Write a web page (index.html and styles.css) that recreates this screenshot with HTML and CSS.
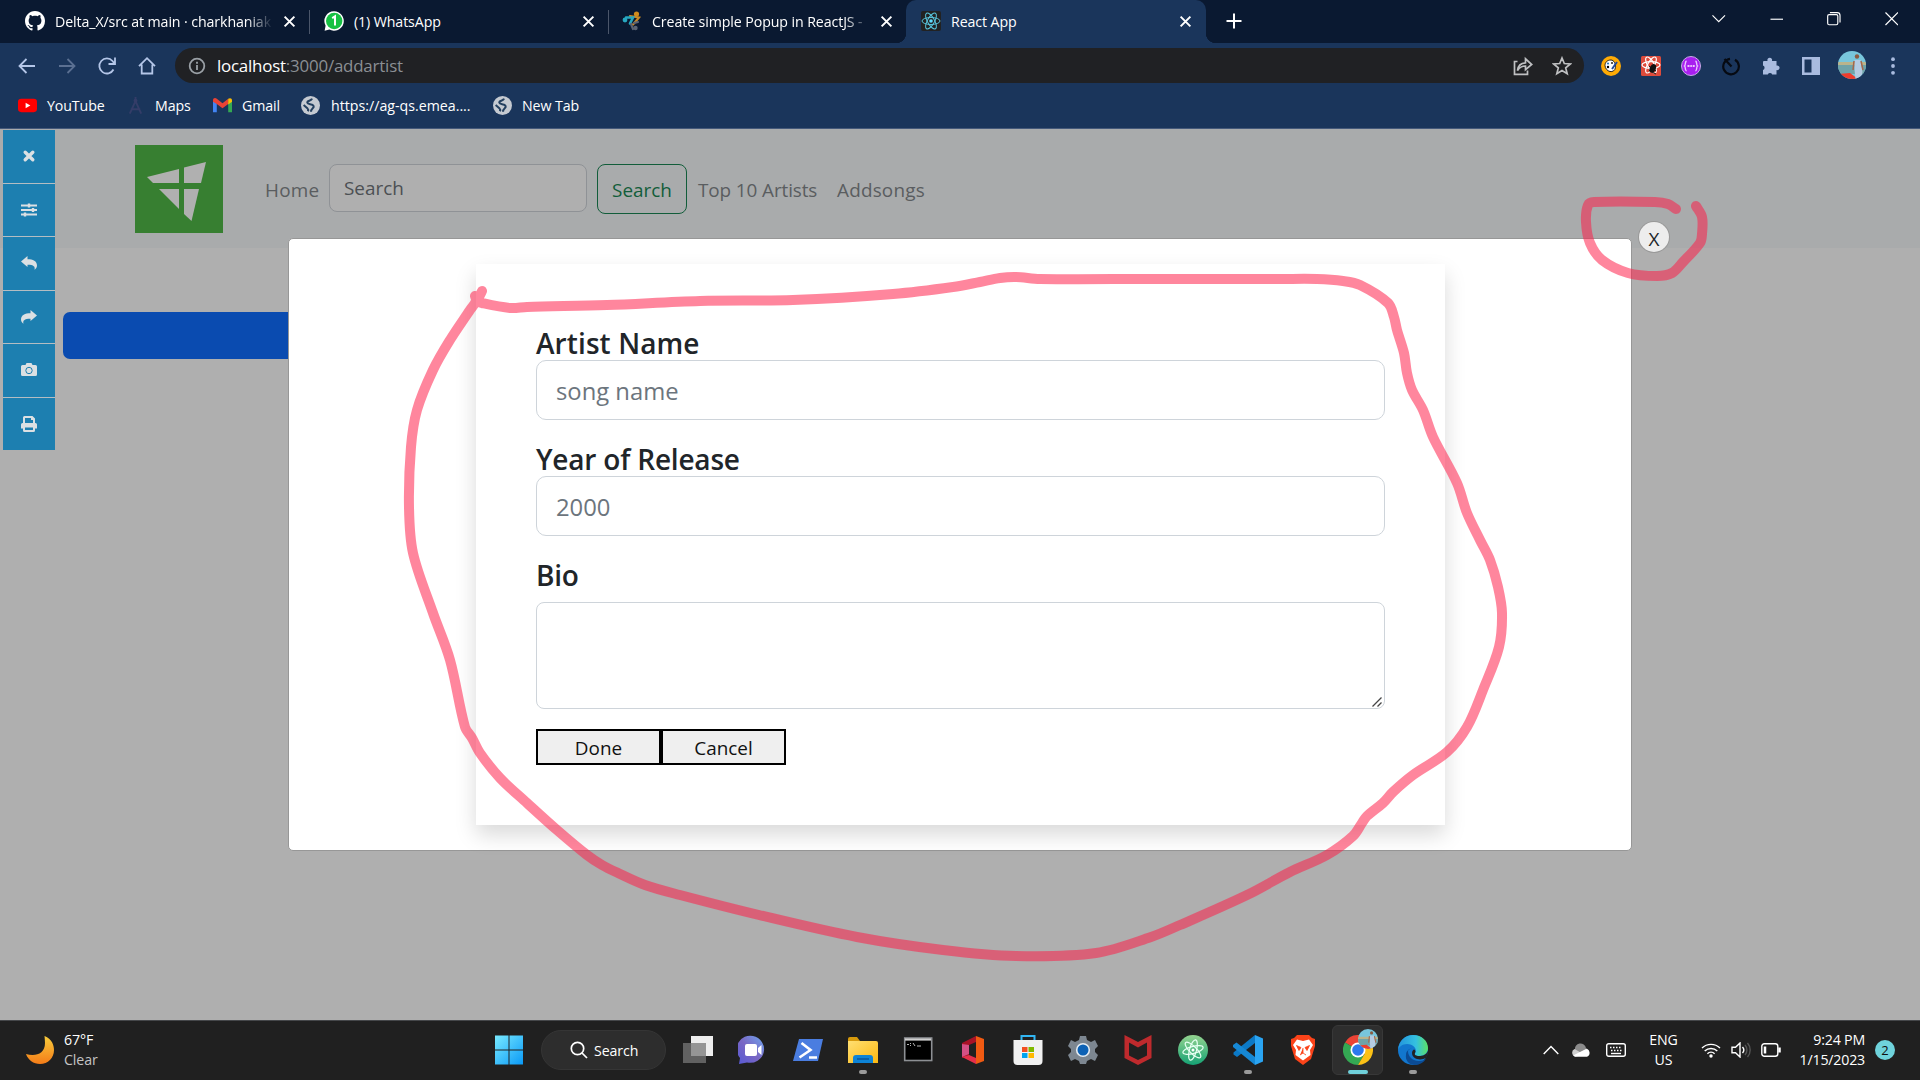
FILE: index.html
```html
<!DOCTYPE html>
<html lang="en">
<head>
<meta charset="utf-8">
<title>React App</title>
<link rel="stylesheet" href="styles.css">
</head>
<body>
<div class="desktop">
  <header class="tabstrip">
    <div class="tab tab-first">
      <svg class="fav" viewBox="0 0 16 16" fill="#fff"><path d="M8 0C3.58 0 0 3.58 0 8c0 3.54 2.29 6.53 5.47 7.59.4.07.55-.17.55-.38 0-.19-.01-.82-.01-1.49-2.01.37-2.53-.49-2.69-.94-.09-.23-.48-.94-.82-1.13-.28-.15-.68-.52-.01-.53.63-.01 1.08.58 1.23.82.72 1.21 1.87.87 2.33.66.07-.52.28-.87.51-1.07-1.78-.2-3.64-.89-3.64-3.95 0-.87.31-1.59.82-2.15-.08-.2-.36-1.02.08-2.12 0 0 .67-.21 2.2.82.64-.18 1.32-.27 2-.27s1.36.09 2 .27c1.53-1.04 2.2-.82 2.2-.82.44 1.1.16 1.92.08 2.12.51.56.82 1.27.82 2.15 0 3.07-1.87 3.75-3.65 3.95.29.25.54.73.54 1.48 0 1.07-.01 1.93-.01 2.2 0 .21.15.46.55.38A8.01 8.01 0 0 0 16 8c0-4.42-3.58-8-8-8z"/></svg>
      <span class="tab-title fade">Delta_X/src at main · charkhaniak</span>
      <svg class="close" viewBox="0 0 12 12"><path d="M1.5 1.5l9 9m0-9l-9 9"/></svg>
    </div>
    <div class="tab tab-second">
      <svg class="fav" viewBox="0 0 20 20"><path d="M10 .3A9.7 9.7 0 1 1 5.4 18.5L.6 19.8l1-5A9.7 9.7 0 0 1 10 .3z" fill="#fff"/><circle cx="10.2" cy="10" r="8.2" fill="#17c143"/><path d="M8.2 7.2l2.8-1.8v9.2" fill="none" stroke="#fff" stroke-width="2"/></svg>
      <span class="tab-title">(1) WhatsApp</span>
      <svg class="close" viewBox="0 0 12 12"><path d="M1.5 1.5l9 9m0-9l-9 9"/></svg>
    </div>
    <div class="tab tab-third">
      <svg class="fav" viewBox="0 0 20 20" fill="none" stroke-linecap="round"><circle cx="14.5" cy="3" r="2.6" fill="#d08b1c"/><path d="M8 5l9 1.5-6 7" stroke="#c98a25" stroke-width="2.2"/><circle cx="3" cy="9" r="2.4" fill="#27a8c0"/><path d="M4 6.5l7 0 -3 6" stroke="#27a8c0" stroke-width="2.6"/><circle cx="13.5" cy="17" r="2.2" fill="#5b6474"/><path d="M9 13l2 5m1-6l4-1" stroke="#5b6474" stroke-width="2.2"/></svg>
      <span class="tab-title fade">Create simple Popup in ReactJS -</span>
      <svg class="close" viewBox="0 0 12 12"><path d="M1.5 1.5l9 9m0-9l-9 9"/></svg>
    </div>
    <div class="tab tab-active">
      <svg class="fav" viewBox="0 0 20 20"><rect width="20" height="20" rx="2" fill="#222"/><g fill="none" stroke="#58c4dc" stroke-width="1"><ellipse cx="10" cy="10" rx="9" ry="3.5" transform="rotate(0 10 10)"/><ellipse cx="10" cy="10" rx="9" ry="3.5" transform="rotate(60 10 10)"/><ellipse cx="10" cy="10" rx="9" ry="3.5" transform="rotate(120 10 10)"/></g><circle cx="10" cy="10" r="1.8" fill="#61dafb"/></svg>
      <span class="tab-title">React App</span>
      <svg class="close" viewBox="0 0 12 12"><path d="M1.5 1.5l9 9m0-9l-9 9"/></svg>
    </div>
    <svg class="newtab" viewBox="0 0 16 16"><path d="M8 .5v15M.5 8h15"/></svg>
    <div class="winctl">
      <svg viewBox="0 0 14 14"><path d="M.5 3.5L7 10l6.500-6.500"/></svg>
      <svg viewBox="0 0 14 14"><path d="M.5 7.500h13"/></svg>
      <svg viewBox="0 0 14 14"><rect x=".7" y="2.700" width="10.500" height="10.500" rx="1.500"/><path d="M3 .7h7.500a3 3 0 0 1 3 3V11"/></svg>
      <svg viewBox="0 0 14 14"><path d="M.5.5l13 13m0-13l-13 13"/></svg>
    </div>
  </header>

  <nav class="toolbar">
    <div class="navbtns">
      <svg viewBox="0 0 20 20"><path d="M18 10H3M9.500 3L2.500 10l7 7"/></svg>
      <svg class="dim" viewBox="0 0 20 20"><path d="M2 10h15M10.500 3l7 7-7 7"/></svg>
      <svg viewBox="0 0 20 20"><path d="M16.500 13.500A7.500 7.500 0 1 1 15.500 5l2 2.500M18 1.500v6.500h-6.500"/></svg>
      <svg viewBox="0 0 20 20"><path d="M2 10.200L10 2.200l8 8M4.700 8.500V17.500h10.600V8.500"/></svg>
    </div>
    <div class="omnibox">
      <svg class="info" viewBox="0 0 18 18"><circle cx="9" cy="9" r="7.300"/><path d="M9 8v5M9 4.800v1.900"/></svg>
      <span class="url"><b>localhost</b>:3000/addartist</span>
      <svg class="omni-icon share" viewBox="0 0 20 20"><path d="M4.500 5.500H1.500V18.300H14.500V14.500"/><path d="M4.500 14.500c.5-5 3.500-7.500 8-7.700V2.800L18.700 8.500l-6.200 5.200V10c-4 0-6 1.300-8 4.500z"/></svg>
      <svg class="omni-icon" viewBox="0 0 20 20"><path d="M10 2l2.300 5.500 6 .5-4.600 3.900 1.500 5.900L10 14.600l-5.200 3.200 1.500-5.900L1.700 8l6-.5z"/></svg>
    </div>
    <div class="exts">
      <svg viewBox="0 0 20 20"><circle cx="10" cy="10" r="10" fill="#ffab05"/><path d="M10 4c-4 0-6 2.500-6 5.500S6.500 15 9 15.500s5-.8 5.500-4S13 4 10 4z" fill="#fff" stroke="#222"/><circle cx="7" cy="7.500" r="1.100" fill="#27b"/><circle cx="11" cy="7" r="1.100" fill="#333"/><circle cx="7" cy="11" r="1.200"/><path d="M16 6l-5 7" stroke="#234a9b" stroke-width="2"/></svg>
      <svg viewBox="0 0 20 20"><rect width="20" height="20" rx="1.500" fill="#de4b3b"/><g fill="none" stroke="#fff" stroke-width="1.200"><ellipse cx="10" cy="9" rx="9" ry="3.300"/><ellipse cx="10" cy="9" rx="9" ry="3.300" transform="rotate(60 10 9)"/><ellipse cx="10" cy="9" rx="9" ry="3.300" transform="rotate(120 10 9)"/></g><ellipse cx="12" cy="12.500" rx="3" ry="4.500" fill="#111" transform="rotate(25 12 12)"/><path d="M8 10l7 5M8 15l7-4M11 16l4 2" stroke="#111"/></svg>
      <svg viewBox="0 0 20 20"><circle cx="10" cy="10" r="9.500" fill="#a81ff0" stroke="#c9a8e8"/><path d="M5.500 5C3.500 6 5 9 3.500 10c1.500 1 0 4 2 5M14.500 5c2 1 .5 4 2 5-1.500 1 0 4-2 5" stroke="#e8c8ff" fill="none" stroke-width="1.400"/><path d="M6.500 10h2m.8 0h1.600m.8 0h2" stroke="#fff" stroke-width="1.500"/></svg>
      <svg viewBox="0 0 20 20"><path d="M9 2.300A7.800 7.800 0 1 0 14 3.300M3.500 2.500l7 7.500" fill="none" stroke="#060a12" stroke-width="2.200" transform="translate(0 .5)"/></svg>
      <svg viewBox="0 0 20 20"><path d="M3 5h3.500a2.400 2.400 0 1 1 4.500 0H15.500v4.500a2.400 2.400 0 1 1 0 4.600V18.500H11.200a2.400 2.400 0 0 0-4.400 0H2V14a2.400 2.400 0 0 0 0-4.500V6a1 1 0 0 1 1-1z" fill="#a9bbdf"/></svg>
      <svg viewBox="0 0 20 20"><path d="M1 1h18v18H1zM3.500 3.500v13h7v-13z" fill="#a9bbdf" fill-rule="evenodd"/></svg>
      <svg class="avatar" viewBox="0 0 28 28"><use href="#person"/></svg>
      <svg viewBox="0 0 20 20" fill="#a9bbdf"><circle cx="10" cy="3.200" r="1.900"/><circle cx="10" cy="10" r="1.900"/><circle cx="10" cy="16.800" r="1.900"/></svg>
    </div>
  </nav>

  <nav class="bookmarks">
    <a class="bm bm-yt"><svg viewBox="0 0 20 20"><rect y="3" width="20" height="14" rx="3.500" fill="#f00"/><path d="M8 7l5 3-5 3z" fill="#fff"/></svg>YouTube</a>
    <a class="bm bm-maps"><svg viewBox="0 0 16 20"><path d="M8 1v4M8 5.500L2 18.500M8 5.500l6 13M3 14h10" fill="none" stroke="#343d68" stroke-width="2"/><circle cx="8" cy="5" r="2" fill="#343d68"/></svg>Maps</a>
    <a class="bm bm-gmail"><svg viewBox="0 0 20 16"><path d="M0 3v12h4V6z" fill="#4285f4"/><path d="M20 3v12h-4V6z" fill="#34a853"/><path d="M0 2.500C0 0 2.500-.5 4 1l6 4.600L16 1v5.500L10 11 4 6.500 0 4z" fill="#ea4335"/><path d="M16 1c2-1.500 4-.5 4 1.500V4l-4 3z" fill="#fbbc04"/></svg>Gmail</a>
    <a class="bm bm-ag"><svg viewBox="0 0 18 18"><use href="#globe"/></svg>https://ag-qs.emea....</a>
    <a class="bm bm-new"><svg viewBox="0 0 18 18"><use href="#globe"/></svg>New Tab</a>
  </nav>

  <main class="page">
    <div class="navbar">
      <svg class="brand" viewBox="0 0 88 88"><rect width="88" height="88" fill="#377f31"/><g fill="#b0b0b0"><path d="M12 32l32-8v14H18z"/><path d="M49 22.500L71 17l-5 21H49z"/><path d="M24 44h20v20z"/><path d="M49 44h15L56.500 76 49 69z"/></g></svg>
      <a class="link home">Home</a>
      <div class="search-field">Search</div>
      <div class="search-btn">Search</div>
      <a class="link top10">Top 10 Artists</a>
      <a class="link songs">Addsongs</a>
    </div>
    <div class="blue-button"></div>

    <aside class="capture-tools">
      <div><svg viewBox="0 0 16 16"><path d="M4.200 4.200l7.600 7.600m0-7.600l-7.600 7.600" stroke="#dbe0e3" stroke-width="3.400" stroke-linecap="round"/></svg></div>
      <div><svg viewBox="0 0 16 16" stroke="#dbe0e3" stroke-width="2"><path d="M0 3.500h16M0 8h16M0 12.500h16"/><path d="M8 1.500v4M12 6v4M4 10.500v4" stroke-width="2.400"/></svg></div>
      <div><svg viewBox="0 0 16 16" fill="#dbe0e3"><path d="M0 6.500L6.500 1v3.200C12 4.200 16 6 16 10.500c0 2-1.200 3.500-2.500 4.300.8-3-.5-5-7-5V12z"/></svg></div>
      <div><svg viewBox="0 0 16 16" fill="#dbe0e3"><path d="M16 6.500L9.500 1v3.200C4 4.200 0 6 0 10.500c0 2 1.200 3.500 2.500 4.300-.8-3 .5-5 7-5V12z"/></svg></div>
      <div><svg viewBox="0 0 16 16"><path d="M1.500 3H4.500l1-2h5l1 2h3A1.500 1.500 0 0 1 16 4.500v8A1.500 1.500 0 0 1 14.500 14h-13A1.500 1.500 0 0 1 0 12.500v-8A1.500 1.500 0 0 1 1.500 3z" fill="#dbe0e3"/><circle cx="8" cy="8.500" r="3.200" fill="none" stroke="#1d7fb0"/></svg></div>
      <div><svg viewBox="0 0 16 16"><path d="M2 7V1.500A1.500 1.500 0 0 1 3.500 0h8L14 2.500V7h.5A1.500 1.500 0 0 1 16 8.500V12.500h-2v2A1.500 1.500 0 0 1 12.500 16h-9A1.500 1.500 0 0 1 2 14.500v-2H0v-4A1.500 1.500 0 0 1 1.500 7z" fill="#dbe0e3"/><path d="M4 2h6v2h2v3H4zM4 11.500h8V14H4z" fill="#1d7fb0"/></svg></div>
    </aside>

    <section class="popup">
      <div class="popup-close">X</div>
      <form class="card">
        <label class="wide">Artist Name</label>
        <div class="field">song name</div>
        <label>Year of Release</label>
        <div class="field">2000</div>
        <label>Bio</label>
        <div class="area"><textarea></textarea><svg class="grip" viewBox="0 0 10 10"><path d="M.5 9.500l9-9M5.500 9.500l4-4"/></svg></div>
        <div class="actions"><button type="button">Done</button><button type="button">Cancel</button></div>
      </form>
    </section>
  </main>

  <footer class="taskbar">
    <div class="weather">
      <svg viewBox="0 0 28 28"><path d="M18.500 0C26 3 28 9 28 14c0 8-6 14-14 14C7.500 28 2 24 0 18c9 2.500 19 .5 19-11 0-3-.5-7-.5-7z" fill="url(#moon)"/></svg>
      <div><span>67°F</span><span class="muted">Clear</span></div>
    </div>
    <div class="apps">
      <div class="app"><svg viewBox="0 0 30 30" fill="url(#win)"><path d="M1 .5h13.500v14H1zM15.500.5H29v14H15.500zM1 15.500h13.500v14H1zM15.500 15.500H29v14H15.500z"/></svg></div>
      <div class="tb-search"><svg viewBox="0 0 18 18"><circle cx="7.500" cy="7.500" r="6.200"/><path d="M12 12l5 5"/></svg>Search</div>
      <div class="app"><svg viewBox="0 0 30 30"><path d="M8 1h22v20H8z" fill="#eee"/><path d="M0 8h23v20H0z" fill="#777" opacity=".75"/></svg></div>
      <div class="app"><svg viewBox="0 0 30 30"><path d="M15 1a14 13.500 0 1 1-6 26.500L1 29l1-6A13.500 13.500 0 0 1 15 1z" fill="url(#chat)"/><rect x="7" y="9" width="12" height="12" rx="2" fill="#fff"/><path d="M20 13l3.500-3v10L20 17z" fill="#fff"/></svg></div>
      <div class="app"><svg viewBox="0 0 30 30"><path d="M6 4h24l-5 22H0z" fill="#4a7de0"/><path d="M8.500 8l9 7-11 7.500M16 22.500h8" fill="none" stroke="#fff" stroke-width="2.600"/></svg></div>
      <div class="app run"><svg viewBox="0 0 30 30"><path d="M0 4q0-2 2-2h7l3 4H0z" fill="#d79a0c"/><path d="M0 6h28q2 0 2 2v20H0z" fill="url(#folder)"/><path d="M5 28v-5q0-3 3-3h14q3 0 3 3v5z" fill="#0d83d6"/><path d="M9 24h12" stroke="#06549c" stroke-width="1.500"/></svg></div>
      <div class="app"><svg viewBox="0 0 30 30"><rect x="1.700" y="3" width="27" height="22.500" fill="#000" stroke="#8d9094" stroke-width="1.600"/><path d="M2 4.500h26" stroke="#d0d0d0" stroke-width="2.200"/><path d="M4 9.500h2m1.500-1.500v1m0 1v1M10 8l2 3m2 0h4" stroke="#ccc" stroke-width=".9"/></svg></div>
      <div class="app"><svg viewBox="0 0 30 30"><path d="M18 1l8 3v22l-8 3z" fill="#f05a12"/><path d="M18 1v6l-7 3v10l-7 3V8z" fill="#a81227"/><path d="M4 22l7-2 7 3v6z" fill="#e52f4a"/><path d="M4 9v13l7-3v-9z" fill="#d55085"/></svg></div>
      <div class="app"><svg viewBox="0 0 30 30"><path d="M8.500 6V1h13v5" fill="none" stroke="#31b6f3" stroke-width="2"/><path d="M.5 5h29v21q0 4-4 4H4.500q-4 0-4-4z" fill="#f1f1f1"/><path d="M9 12h5.500v5H9z" fill="#f25022"/><path d="M15.500 12H21v5h-5.500z" fill="#7fba00"/><path d="M9 18h5.500v5H9z" fill="#00a4ef"/><path d="M15.500 18H21v5h-5.500z" fill="#ffb900"/></svg></div>
      <div class="app"><svg viewBox="0 0 30 30"><path d="M12 1h6l1 4 4 2 4-2 3 6-3 3v3l3 3-3 6-4-2-4 2-1 3h-6l-1-3-4-2-4 2-3-6 3-3v-3l-3-3 3-6 4 2 4-2z" fill="#7d8791"/><circle cx="15" cy="15" r="6.300" fill="#0d62b5" stroke="#e6edf3" stroke-width="1.600"/></svg></div>
      <div class="app"><svg viewBox="0 0 30 30"><path d="M1.500 0L15 7l13.500-7v23L15 30 1.500 23zM6 7.500v13L15 25l9-4.500v-13l-9 5z" fill="#bf2a2d" fill-rule="evenodd"/></svg></div>
      <div class="app"><svg viewBox="0 0 30 30"><circle cx="15" cy="15" r="15" fill="url(#atom)"/><g fill="none" stroke="#e6fff2" stroke-width="1.200"><ellipse cx="15" cy="15" rx="10.500" ry="3.500" transform="rotate(-15 15 15)"/><ellipse cx="15" cy="15" rx="10.500" ry="3.500" transform="rotate(45 15 15)"/><ellipse cx="15" cy="15" rx="10.500" ry="3.500" transform="rotate(105 15 15)"/></g><circle cx="15" cy="15" r="1.500" fill="#fff"/></svg></div>
      <div class="app run"><svg viewBox="0 0 30 30"><path d="M22 0v8L4 22l-3.500-2.500v-2z" fill="#0c79c6"/><path d="M0 12v-2l3.500-2.500L22 22v8z" fill="#1688d5"/><path d="M22 0l8 3.500v23L22 30z" fill="#2aa4f2"/></svg></div>
      <div class="app"><svg viewBox="0 0 30 30"><path d="M9 0h12l3 3 3 1 0 7-4 13-8 6-8-6L3 11 3 4l3-1z" fill="#fb4319"/><path d="M9 4.500l6 1.500 6-1.500 4 5.500-3 5 .5 5-7.500 5.500L7.500 20l.5-5-3-5z" fill="#fff"/><path d="M8.500 10.500l4.500 2-2 3zM21.500 10.500l-4.500 2 2 3zM15 13v5l-3 2m3-2l3 2" fill="#fb4319" stroke="#fb4319" stroke-width=".8"/></svg></div>
      <div class="app active"><svg viewBox="0 0 30 30"><path d="M15 15L2 7.500a15 15 0 0 1 26 0z" fill="#ea4335"/><path d="M15 15L2 7.500A15 15 0 0 0 15 30l6-10z" fill="#34a853"/><path d="M15 8h13.300A15 15 0 0 1 15 30l6.500-11z" fill="#fbc116"/><circle cx="15" cy="15" r="7.500" fill="#fff"/><circle cx="15" cy="15" r="5.800" fill="#2c79ee"/></svg><svg class="mini" viewBox="0 0 28 28"><use href="#person"/></svg></div>
      <div class="app run"><svg viewBox="0 0 30 30"><circle cx="15" cy="15" r="15" fill="#1277ce"/><path d="M0 15C1 5 8 0 15 0c9 0 15 6 15 13 0 5-4 8-9 8-3 0-5-1-4-3 3-4-2-9-8-9-5 0-8 3-9 6z" fill="url(#edge)"/><path d="M10 16c0 6 5 10 11 10 3 0 5-1 7-2-3 4-7 6-11 6-6 0-10-5-9-10 0-4 3-6 6-7-2 1-4 2-4 3z" fill="#0b4b94"/><path d="M17 18c-1 2 1 3 4 3 4 0 7-1 9-5 0 3-.5 5-2 7-6 3-14 1-14-5 0-2 1-3 2-3.500 1.500.5 2 2 1 3.500z" fill="#222"/></svg></div>
    </div>
    <div class="tray">
      <svg class="t-chev" viewBox="0 0 16 10"><path d="M.7 9L8 1.500 15.300 9"/></svg>
      <svg class="t-cloud" viewBox="0 0 20 14"><path d="M4 7a5.500 5.500 0 0 1 11-2 5 5 0 0 1 3 3L8 12z" fill="#8b8b8b"/><path d="M4 13.500A4 4 0 0 1 3.500 6L14 12z" fill="#d0d0d0"/><path d="M2 12.500l13-6.500a4 4 0 0 1 1 7.700H4z" fill="#fff"/></svg>
      <svg class="t-key" viewBox="0 0 20 14"><rect x=".7" y=".7" width="18.600" height="12.600" rx="2"/><path d="M4 4.500h12M5 7.500h11" stroke-dasharray="1.500 1.500"/><path d="M5 10.500h10"/></svg>
      <div class="lang"><span>ENG</span><span>US</span></div>
      <svg class="t-wifi" viewBox="0 0 20 16"><path d="M1 6a13 13 0 0 1 18 0M3.700 9a9 9 0 0 1 12.600 0M6.400 11.700a5 5 0 0 1 7.200 0"/><circle cx="10" cy="14" r="1.700" fill="#fff" stroke="none"/></svg>
      <svg class="t-vol" viewBox="0 0 20 16"><path d="M1 5.300h3.500L9 1v14l-4.500-4.300H1z"/><path d="M11.500 5a4.500 4.500 0 0 1 0 6"/><path d="M14 3a7.500 7.500 0 0 1 0 10M16.500 1a10.500 10.500 0 0 1 0 14" stroke="#555"/></svg>
      <svg class="t-bat" viewBox="0 0 20 14"><rect x=".8" y=".8" width="16" height="12.400" rx="2.500"/><path d="M4 3.500v7" stroke-width="2.500"/><path d="M18.500 4.500v5" stroke-width="2.500"/></svg>
      <div class="clock"><span>9:24 PM</span><span>1/15/2023</span></div>
      <div class="badge">2</div>
    </div>
  </footer>

  <svg class="ink" viewBox="0 0 1920 1080" width="1920" height="1080">
    <defs>
      <linearGradient id="moon" x2="0" y2="1"><stop stop-color="#f8cc3c"/><stop offset="1" stop-color="#f47c18"/></linearGradient>
      <linearGradient id="win" gradientUnits="userSpaceOnUse" x1="0" y1="0" x2="30" y2="30"><stop stop-color="#7cecff"/><stop offset="1" stop-color="#0797f6"/></linearGradient>
      <linearGradient id="chat" x1="1" x2="0" y2="1"><stop stop-color="#6ea6ee"/><stop offset=".5" stop-color="#7a67c4"/><stop offset="1" stop-color="#5558d6"/></linearGradient>
      <linearGradient id="folder" x2="1" y2="1"><stop stop-color="#ffdf72"/><stop offset="1" stop-color="#fbb811"/></linearGradient>
      <linearGradient id="atom" x2="0" y2="1"><stop stop-color="#94d38f"/><stop offset="1" stop-color="#15a274"/></linearGradient>
      <linearGradient id="edge"><stop stop-color="#2394dc"/><stop offset=".6" stop-color="#35c1e0"/><stop offset="1" stop-color="#5be163"/></linearGradient>
      <clipPath id="round"><circle cx="14" cy="14" r="14"/></clipPath>
      <g id="person" clip-path="url(#round)"><path d="M0 0h28v28H0z" fill="#78c6dc"/><path d="M0 11h28v4H0z" fill="#b9b48c"/><path d="M0 14h28v9H0z" fill="#6fa3a8"/><path d="M0 23l12-1 8 6H0z" fill="#ee3c2c"/><circle cx="19" cy="5.500" r="2.200" fill="#8b5b42"/><path d="M16.500 9l6 0 2 12-2 7h-5l-1-9z" fill="#b4cbe2"/><path d="M16 10l-1 9M23 10l2 9" stroke="#a4664b" stroke-width="1.500"/></g>
      <g id="globe"><circle cx="9" cy="9" r="9" fill="#c5cad1"/><path d="M10.500 2.500c-1 2.500-5 1.500-4.500 4 .5 2 5 .5 6 3 .7 2.200-2.500 2-2.500 5.500M2.500 8.500l3.500 3c1 1 1 2 .5 3" fill="none" stroke="#24405f" stroke-width="1.900"/></g>
    </defs>
    <path class="stroke" data-points="475,296 476,301 470,310 450,340 433,370 417,410 411,447 409,507 413,553 433,613 450,660 465,727 472,738 480,753 500,778 527,803 557,830 587,855 602,865 618,873 645,885 680,895 759,915 857,937 943,950 1016,956 1096,953 1151,937 1180,925 1247,895 1290,872 1327,855 1353,836 1362,823 1367,816 1383,803 1393,792 1413,775 1447,752 1467,727 1483,690 1499,647 1502,613 1498,587 1490,560 1480,540 1467,513 1457,483 1433,437 1423,410 1412,390 1407,373 1404,353 1397,330 1394,317 1388,303 1360,285 1343,281 1317,279 1280,279 1150,279 1040,279 1016,277 1000,278 980,282 953,287 893,294 793,300 700,301 607,305 527,307 510,308 482,303 478,301 482,291"/>
    <path class="stroke" data-points="1676,209 1668,204 1655,202 1594,202 1588,205 1586,222 1590,243 1602,260 1628,273 1657,276 1672,273 1683,262 1700,243 1702,234 1702,217 1696,206"/>
  </svg>
</div>
<script src="ink.js"></script>
</body>
</html>
```

FILE: ink.js
```js
// Turns each list of pen points into a smooth Catmull-Rom curve.
document.querySelectorAll('.stroke').forEach(function (el) {
  var p = el.dataset.points.split(' ').map(function (s) { return s.split(',').map(Number); });
  function len(u, v) { return Math.hypot(v[0] - u[0], v[1] - u[1]) || 1; }
  var d = 'M' + p[0];
  for (var i = 0; i < p.length - 1; i++) {
    var a = p[i - 1] || p[i], b = p[i], c = p[i + 1], e = p[i + 2] || c;
    // tangents are scaled to the segment so that short segments do not overshoot
    var s = len(b, c) / 3, t1 = s / len(a, c), t2 = s / len(b, e);
    d += 'C' + [b[0] + (c[0] - a[0]) * t1, b[1] + (c[1] - a[1]) * t1,
                c[0] - (e[0] - b[0]) * t2, c[1] - (e[1] - b[1]) * t2, c[0], c[1]].join(' ');
  }
  el.setAttribute('d', d);
});
```

FILE: styles.css
```css
* { box-sizing: border-box; }
body { margin: 0; font-family: "Open Sans", "Noto Sans", sans-serif; overflow: hidden; }
svg { display: block; flex: none; }
.desktop { position: relative; width: 1920px; height: 1080px; display: flex; flex-direction: column; overflow: hidden; background: #afafaf; }

/* tab strip */
.tabstrip { height: 43px; flex: none; display: flex; background: #0a1931; color: #fff; font-size: 14.2px; letter-spacing: -.1px; }
.tab { position: relative; display: flex; align-items: center; padding: 0 14px 1px 14px; width: 299px; }
.tab-first { width: 310px; padding-left: 25px; }
.tab-third { width: 297px; padding: 0 13px 1px; }
.tab-first::after, .tab-second::after { content: ""; position: absolute; right: 0; top: 10px; width: 1px; height: 24px; background: #4b566a; }
.fav { width: 20px; height: 20px; margin-right: 10px; }
.tab-title { flex: 1; white-space: nowrap; overflow: hidden; margin-right: 10px; }
.fade { -webkit-mask-image: linear-gradient(90deg, #000 88%, transparent); mask-image: linear-gradient(90deg, #000 88%, transparent); }
.close { width: 13px; height: 13px; fill: none; stroke: #fff; stroke-width: 1.8; }
.tab-active { width: 300px; padding-left: 15px; background: #1a355b; border-radius: 10px 10px 0 0; }
.tab-active::before, .tab-active::after { content: ""; position: absolute; bottom: 0; width: 10px; height: 10px; }
.tab-active::before { left: -10px; background: radial-gradient(circle at 0 0, transparent 10px, #1a355b 10.500px); }
.tab-active::after { right: -10px; background: radial-gradient(circle at 100% 0, transparent 10px, #1a355b 10.500px); }
.newtab { width: 16px; height: 16px; margin: 13px 0 0 20px; stroke: #fff; stroke-width: 2; fill: none; }
.winctl { margin-left: auto; display: flex; gap: 44px; padding: 12px 22px 0 0; }
.winctl svg { width: 13.500px; height: 13.500px; fill: none; stroke: #fff; stroke-width: 1.200; }

/* address row */
.toolbar { height: 45px; flex: none; display: flex; align-items: center; background: #1a355b; padding: 0 17px 0 17px; }
.navbtns { display: flex; gap: 20px; width: 158px; }
.navbtns svg { width: 20px; height: 20px; fill: none; stroke: #b4c6e8; stroke-width: 1.800; }
.navbtns .dim { stroke: #5b7092; }
.omnibox { width: 1410px; height: 35px; border-radius: 18px; background: #202124; display: flex; align-items: center; padding: 0 12px 0 13px; }
.info { width: 18px; height: 18px; fill: none; stroke: #9aa0a6; stroke-width: 1.800; }
.url { margin-left: 11px; font-size: 16.900px; color: #8b8f94; flex: 1; letter-spacing: -.2px; }
.url b { font-weight: 400; color: #fff; }
.omni-icon { width: 20px; height: 20px; fill: none; stroke: #bfc0c2; stroke-width: 1.700; }
.share { margin-right: 19px; }
.exts { display: flex; align-items: center; gap: 20px; margin-left: 17px; }
.exts svg { width: 20px; height: 20px; }
.exts .avatar { width: 28px; height: 28px; margin: -2px -3px 0 -3px; }

/* bookmarks row */
.bookmarks { height: 41px; flex: none; background: #1a355b; border-bottom: 1px solid #45597a; display: flex; align-items: center; padding: 0 0 5px 18px; color: #fff; font-size: 14.200px; letter-spacing: -.1px; }
.bm { display: flex; align-items: center; gap: 10px; white-space: nowrap; }
.bm svg { width: 19px; height: 19px; }
.bm-yt { width: 108px; }
.bm-maps { width: 87px; }
.bm-gmail { width: 88px; }
.bm-ag { width: 192px; gap: 11px; letter-spacing: 0; }

/* dimmed page */
.page { position: relative; flex: 1; background: #afafaf; }
.navbar { height: 119px; background: #a9abac; display: flex; align-items: flex-start; padding: 16px 0 0 135px; font-size: 18.900px; color: #5a5d60; }
.brand { width: 88px; height: 88px; margin-right: 42px; }
.link { margin-top: 31px; line-height: 28px; white-space: nowrap; }
.home { width: 64px; letter-spacing: .2px; }
.songs { letter-spacing: .2px; }
.search-field { width: 258px; height: 48px; margin: 19px 10px 0 0; border: 1px solid #8f9296; border-radius: 8px; background: #afafaf; padding: 0 14px; line-height: 47px; color: #4c5054; }
.search-btn { width: 90px; height: 50px; margin: 19px 11px 0 0; border: 1px solid #125d3a; border-radius: 8px; color: #125d3a; text-align: center; line-height: 50px; }
.top10 { width: 139px; letter-spacing: -.1px; }
.blue-button { width: 900px; height: 47px; margin: 64px 0 0 63px; background: #0a4bb0; border-radius: 7px; }

/* floating capture toolbar */
.capture-tools { position: absolute; left: 3px; top: 1px; width: 52px; height: 320px; display: flex; flex-direction: column; gap: 1px; background: #b5bdc2; }
.capture-tools div { flex: 1; background: #1d7fb0; display: flex; align-items: center; justify-content: center; }
.capture-tools svg { width: 16px; height: 16px; }

/* popup */
.popup { position: absolute; left: 288px; top: 109px; width: 1344px; height: 613px; background: #fff; border: 1px solid #979797; border-radius: 5px; padding: 25px 186px 0 187px; }
.popup-close { position: absolute; left: 1350px; top: -17px; width: 30px; height: 30px; border-radius: 50%; background: #ededed; box-shadow: 0 0 0 1px #999; font-size: 19px; line-height: 34px; text-align: center; color: #212529; }
.card { height: 561px; background: #fff; box-shadow: 0 10px 20px rgba(0,0,0,.15); padding: 60px; display: flex; flex-direction: column; color: #212529; }
.card label { font-size: 28px; font-weight: 600; height: 36px; line-height: 38px; letter-spacing: -.2px; }
.card .wide { letter-spacing: .1px; }
.field { height: 60px; border: 1px solid #ced4da; border-radius: 10px; padding: 0 19px; font-size: 23.800px; line-height: 60px; color: #6c757d; margin-bottom: 20px; }
.area { position: relative; height: 107px; margin: 10px 0 20px; }
textarea { display: block; height: 107px; width: 849px; border: 1px solid #ced4da; border-radius: 8px; background: #fff; resize: none; }
.grip { position: absolute; right: 3px; bottom: 2px; width: 10px; height: 10px; stroke: #444; stroke-width: 1.300; }
.actions { display: flex; }
.actions button { width: 125px; height: 36px; border: 2px solid #000; background: #efefef; font: 18.900px "Open Sans", sans-serif; padding: 1px 0 0; color: #111; }

/* taskbar */
.taskbar { height: 60px; flex: none; background: #202020; border-top: 1px solid #45474a; display: flex; align-items: center; padding-bottom: 1px; color: #fff; font-size: 14.200px; letter-spacing: -.1px; }
.taskbar span { display: block; line-height: 20px; white-space: nowrap; }
.weather { display: flex; align-items: center; gap: 10px; width: 481px; padding-left: 26px; }
.weather svg { width: 28px; height: 28px; }
.muted { color: #c4c4c4; }
.apps { display: flex; align-items: center; height: 58px; }
.app { position: relative; width: 55px; height: 50px; display: flex; align-items: center; justify-content: center; }
.app svg { width: 30px; height: 30px; }
.run::after, .active::after { content: ""; position: absolute; bottom: 1px; left: 24px; width: 8px; height: 4px; border-radius: 2px; background: #9a9a9a; }
.active::after { left: 18px; width: 20px; background: #6fd0da; }
.active::before { content: ""; position: absolute; inset: 0 2px; background: #2e2e2e; border: 1px solid #383838; border-radius: 6px; }
.active svg { position: relative; }
.app .mini { position: absolute; left: 28px; top: 4px; width: 20px; height: 20px; }
.tb-search { width: 125px; height: 40px; margin: 0 4px 0 5px; border-radius: 20px; background: #2d2d2d; border: 1px solid #353535; display: flex; align-items: center; gap: 6px; padding-left: 28px; }
.tb-search svg { width: 18px; height: 18px; fill: none; stroke: #fff; stroke-width: 1.700; }
.tray { margin-left: auto; display: flex; align-items: center; padding-right: 25px; }
.tray svg { fill: none; stroke: #fff; stroke-width: 1.400; }
.t-chev { width: 16px; height: 10px; margin-right: 12px; }
.tray .t-cloud { width: 20px; height: 14px; margin-right: 15px; stroke: none; }
.t-key { width: 20px; height: 14px; }
.lang { width: 75px; text-align: center; }
.t-wifi { width: 20px; height: 16px; margin-right: 10px; }
.t-vol { width: 20px; height: 16px; margin-right: 10px; }
.t-bat { width: 20px; height: 14px; }
.clock { width: 84px; text-align: right; letter-spacing: -.2px; }
.badge { width: 20px; height: 20px; margin-left: 10px; border-radius: 50%; background: #6fd3dc; color: #111; text-align: center; line-height: 20px; font-size: 13px; }

/* pen annotation */
.ink { position: absolute; left: 0; top: 0; pointer-events: none; }
.stroke { fill: none; stroke: #ff1b46; stroke-opacity: .53; stroke-width: 10; stroke-linecap: round; stroke-linejoin: round; }
```
